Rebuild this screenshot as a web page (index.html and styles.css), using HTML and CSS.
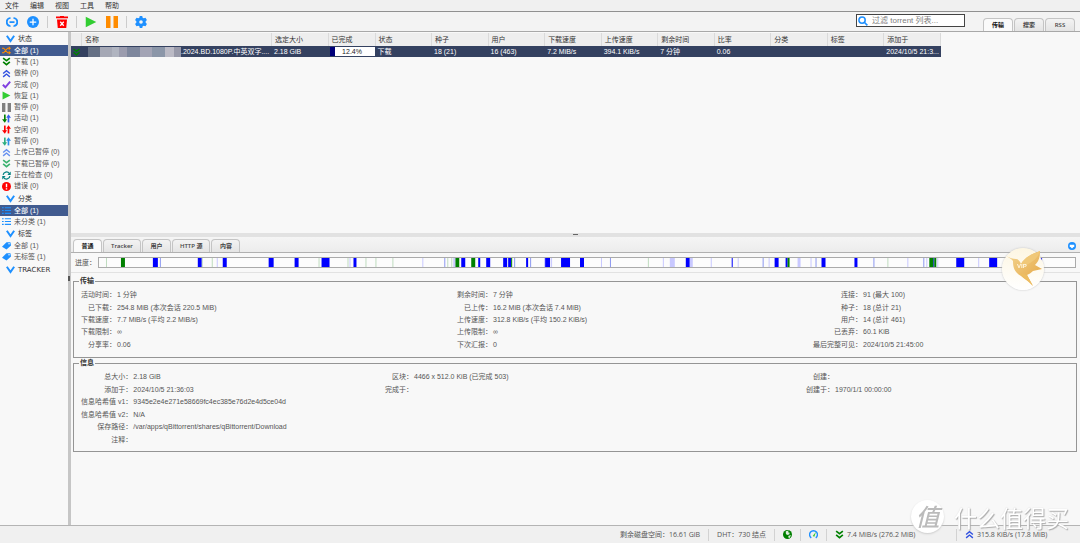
FILE: index.html
```html
<!DOCTYPE html>
<html>
<head>
<meta charset="utf-8">
<title>qBittorrent</title>
<link rel="stylesheet" href="styles.css">
</head>
<body>
<svg class="defs" aria-hidden="true">
  <symbol id="down2" viewBox="0 0 16 16"><path d="M2 2l6 4.500 6-4.500M2 8.500l6 5 6-5" fill="none" stroke="currentColor" stroke-width="3"/></symbol>
  <symbol id="up2" viewBox="0 0 16 16"><path d="M2 8l6-5 6 5M2 14l6-5 6 5" fill="none" stroke="currentColor" stroke-width="2.500"/></symbol>
  <symbol id="chev" viewBox="0 0 16 16"><path d="M1.500 3L8 12.500l6.500-9.500" fill="none" stroke="#1e90ff" stroke-width="3.500"/></symbol>
  <symbol id="shuffle" viewBox="0 0 16 16"><path d="M0 4h3l7 8h3M0 12h3l7-8h3" fill="none" stroke="#ff8c00" stroke-width="2"/><path d="M12 .5L16 4l-4 3.500zM12 8.500l4 3.500-4 3.500z" fill="#ff8c00"/></symbol>
  <symbol id="check" viewBox="0 0 16 16"><path d="M1.500 8.500l4.500 4.500L14.500 3" fill="none" stroke="#8040e0" stroke-width="3.500"/></symbol>
  <symbol id="play" viewBox="0 0 16 16"><path d="M1 1l14 7-14 7z" fill="#32cd32"/></symbol>
  <symbol id="pause" viewBox="0 0 16 16"><path d="M0 0h6v16H0zM10 0h6v16h-6z" fill="currentColor"/></symbol>
  <symbol id="active" viewBox="0 0 16 16"><path d="M5 1v11" stroke="var(--a)" stroke-width="3"/><path d="M0 9.500h9L5 15.500z" fill="var(--a)"/><path d="M11.500 4v11" stroke="var(--b)" stroke-width="3"/><path d="M7.500 6.500h8.500L11.500.5z" fill="var(--b)"/></symbol>
  <symbol id="sync" viewBox="0 0 16 16"><path d="M2 7a6 6 0 0 1 11-2.500M14 9a6 6 0 0 1-11 2.500" fill="none" stroke="#008080" stroke-width="2.200"/><path d="M15.500 1v6h-6zM.5 15V9h6z" fill="#008080"/></symbol>
  <symbol id="error" viewBox="0 0 16 16"><circle cx="8" cy="8" r="8" fill="#f00"/><path d="M8 3v6.500M8 11v2.500" stroke="#fff" stroke-width="2.500"/></symbol>
  <symbol id="list" viewBox="0 0 16 16"><path d="M0 3h3M5 3h11M0 8h3M5 8h11M0 13h3M5 13h11" stroke="#1e90ff" stroke-width="2"/></symbol>
  <symbol id="tag" viewBox="0 0 16 16"><path d="M8 2h7l1 6-8 7-8-5z" fill="#1e90ff"/><circle cx="12.500" cy="5" r="1.300" fill="#fff"/></symbol>
  <symbol id="link" viewBox="0 0 24 24"><path d="M9 4H8a8 8 0 0 0-6.500 8A8 8 0 0 0 8 20h1M15 4h1a8 8 0 0 1 6.500 8A8 8 0 0 1 16 20h-1M7 12h10" fill="none" stroke="#1e90ff" stroke-width="3.500"/></symbol>
  <symbol id="plus" viewBox="0 0 24 24"><circle cx="12" cy="12" r="12" fill="#1e90ff"/><path d="M12 5.500v13M5.500 12h13" stroke="#fff" stroke-width="2.500"/></symbol>
  <symbol id="trash" viewBox="0 0 24 24"><path d="M0 1h8V0h8v1h8v3.500H0zM2 7h20l-1.500 17h-17z" fill="#f00"/><path d="M8.500 11.500l7 8M15.500 11.500l-7 8" stroke="#fff" stroke-width="2.500"/></symbol>
  <symbol id="gear" viewBox="0 0 24 24"><path d="M9.500 0h5l.8 3.500 2.200 1.200L21 3.600l2.800 4.600-2.600 2.600v2.400l2.600 2.600L21 20.400l-3.500-1.100-2.200 1.200-.8 3.500h-5l-.8-3.500-2.200-1.200L3 20.400.2 15.800l2.600-2.600v-2.400L.2 8.200 3 3.600l3.500 1.100 2.200-1.200z" fill="#1e90ff"/><circle cx="12" cy="12" r="3.600" fill="#f4f4f4"/></symbol>
</svg>

<nav class="menubar">
  <button>文件</button><button>编辑</button><button>视图</button><button>工具</button><button>帮助</button>
</nav>

<header class="toolbar">
  <div class="tools">
    <button aria-label="添加链接"><svg><use href="#link"/></svg></button>
    <button aria-label="添加文件"><svg><use href="#plus"/></svg></button>
    <i class="sep"></i>
    <button aria-label="删除"><svg><use href="#trash"/></svg></button>
    <i class="sep"></i>
    <button aria-label="恢复"><svg><use href="#play"/></svg></button>
    <button aria-label="暂停" class="orange"><svg><use href="#pause"/></svg></button>
    <i class="sep"></i>
    <button aria-label="选项"><svg><use href="#gear"/></svg></button>
  </div>
  <label class="filter">
    <svg viewBox="0 0 16 16"><circle cx="6.500" cy="6.500" r="5" fill="none" stroke="#1e90ff" stroke-width="2.500"/><path d="M10.500 10.500l4.500 4.500" stroke="#1e90ff" stroke-width="2.500"/></svg>
    <input type="text" placeholder="过滤 torrent 列表..." aria-label="过滤 torrent 列表">
  </label>
  <div class="tabs">
    <button class="on">传输</button><button>搜索</button><button>RSS</button>
  </div>
</header>

<main class="work">
  <aside class="side">
    <h2><svg><use href="#chev"/></svg>状态</h2>
    <ul class="states">
      <li class="sel"><svg><use href="#shuffle"/></svg>全部 (1)</li>
      <li><svg class="green"><use href="#down2"/></svg>下载 (1)</li>
      <li><svg class="blue"><use href="#up2"/></svg>做种 (0)</li>
      <li><svg><use href="#check"/></svg>完成 (0)</li>
      <li><svg><use href="#play"/></svg>恢复 (1)</li>
      <li><svg class="gray"><use href="#pause"/></svg>暂停 (0)</li>
      <li><svg class="a1"><use href="#active"/></svg>活动 (1)</li>
      <li><svg class="a2"><use href="#active"/></svg>空闲 (0)</li>
      <li><svg class="a3"><use href="#active"/></svg>暂停 (0)</li>
      <li><svg class="sky"><use href="#up2"/></svg>上传已暂停 (0)</li>
      <li><svg class="mint"><use href="#down2"/></svg>下载已暂停 (0)</li>
      <li><svg><use href="#sync"/></svg>正在检查 (0)</li>
      <li><svg><use href="#error"/></svg>错误 (0)</li>
    </ul>
    <h2><svg><use href="#chev"/></svg>分类</h2>
    <ul>
      <li class="sel"><svg><use href="#list"/></svg>全部 (1)</li>
      <li><svg><use href="#list"/></svg>未分类 (1)</li>
    </ul>
    <h2><svg><use href="#chev"/></svg>标签</h2>
    <ul>
      <li><svg><use href="#tag"/></svg>全部 (1)</li>
      <li><svg><use href="#tag"/></svg>无标签 (1)</li>
    </ul>
    <h2 class="latin"><svg><use href="#chev"/></svg>TRACKER</h2>
  </aside>
  <div class="vsplit"><i></i></div>

  <div class="content">
    <section class="torrents">
      <table>
        <colgroup><col class="c-icon"><col class="c-name"><col><col class="c-done"><col span="10"></colgroup>
        <thead><tr><th></th><th>名称</th><th>选定大小</th><th>已完成</th><th>状态</th><th>种子</th><th>用户</th><th>下载速度</th><th>上传速度</th><th>剩余时间</th><th>比率</th><th>分类</th><th>标签</th><th>添加于</th></tr></thead>
        <tbody><tr>
          <td class="state"><svg><use href="#down2"/></svg></td>
          <td><div class="name"><i class="mosaic"></i><span>.2024.BD.1080P.中英双字....</span></div></td>
          <td>2.18 GiB</td>
          <td class="done"><div class="meter"><i style="width:12.4%"></i><span>12.4%</span></div></td>
          <td>下载</td><td>18 (21)</td><td>16 (463)</td><td>7.2 MiB/s</td><td>394.1 KiB/s</td><td>7 分钟</td><td>0.06</td><td></td><td></td><td>2024/10/5 21:3...</td>
        </tr></tbody>
      </table>
    </section>
    <div class="hsplit"><i></i></div>
    <section class="details">
      <div class="detailbar">
        <div class="tabs"><button class="on">普通</button><button>Tracker</button><button>用户</button><button>HTTP 源</button><button>内容</button></div>
        <button class="collapse" aria-label="收起"><svg viewBox="0 0 16 16"><circle cx="8" cy="8" r="8" fill="#1e90ff"/><path d="M3.500 5.500h9v3L8 13 3.500 8.500z" fill="#fff"/></svg></button>
      </div>
      <div class="progress">
        <span>进度：</span>
        <svg class="pieces" viewBox="98 0 978 10" preserveAspectRatio="none">
          <path class="b" d="M152 0h5v10h-5zM197 0h4v10h-4zM222 0h4v10h-4zM268 0h5v10h-5zM294 0h4v10h-4zM321 0h8v10h-8zM353 0h3v10h-3zM461 0h4v10h-4zM478 0h2v10h-2zM486 0h4v10h-4zM503 0h4v10h-4zM508 0h3v10h-3zM526 0h2v10h-2zM545 0h5v10h-5zM561 0h9v10h-9zM580 0h4v10h-4zM686 0h4v10h-4zM732 0h1v10h-1zM775 0h4v10h-4zM786 0h2v10h-2zM822 0h4v10h-4zM855 0h3v10h-3zM934 0h1v10h-1zM957 0h8v10h-8zM990 0h8v10h-8zM1040 0h3v10h-3z"/>
          <path class="g" d="M120 0h4v10h-4zM455 0h4v10h-4zM471 0h4v10h-4zM511 0h1v10h-1zM788 0h2v10h-2zM930 0h4v10h-4zM935 0h2v10h-2z"/>
          <path class="lb" d="M216 0h1v10h-1zM349 0h1v10h-1zM422 0h1v10h-1zM453 0h2v10h-2zM544 0h1v10h-1zM551 0h1v10h-1zM601 0h1v10h-1zM663 0h1v10h-1zM670 0h5v10h-5zM690 0h3v10h-3zM711 0h1v10h-1zM738 0h1v10h-1zM769 0h1v10h-1zM798 0h3v10h-3zM811 0h1v10h-1zM908 0h1v10h-1zM927 0h1v10h-1zM938 0h1v10h-1zM979 0h1v10h-1z"/>
          <path class="mb" d="M159 0h1v10h-1zM444 0h1v10h-1zM514 0h1v10h-1zM530 0h1v10h-1zM610 0h1v10h-1zM763 0h1v10h-1zM816 0h1v10h-1zM874 0h1v10h-1zM924 0h1v10h-1z"/>
          <path class="lg" d="M105 0h1v10h-1zM201 0h1v10h-1zM211 0h1v10h-1zM318 0h1v10h-1zM347 0h1v10h-1zM365 0h1v10h-1zM375 0h1v10h-1zM392 0h1v10h-1zM447 0h1v10h-1zM451 0h1v10h-1zM648 0h1v10h-1zM888 0h1v10h-1z"/>
        </svg>
      </div>
      <fieldset class="transfer">
        <legend>传输</legend>
        <div class="cols">
          <dl><dt>活动时间：</dt><dd>1 分钟</dd><dt>已下载：</dt><dd>254.8 MiB (本次会话 220.5 MiB)</dd><dt>下载速度：</dt><dd>7.7 MiB/s (平均 2.2 MiB/s)</dd><dt>下载限制：</dt><dd>∞</dd><dt>分享率：</dt><dd>0.06</dd></dl>
          <dl><dt>剩余时间：</dt><dd>7 分钟</dd><dt>已上传：</dt><dd>16.2 MiB (本次会话 7.4 MiB)</dd><dt>上传速度：</dt><dd>312.8 KiB/s (平均 150.2 KiB/s)</dd><dt>上传限制：</dt><dd>∞</dd><dt>下次汇报：</dt><dd>0</dd></dl>
          <dl><dt>连接：</dt><dd>91 (最大 100)</dd><dt>种子：</dt><dd>18 (总计 21)</dd><dt>用户：</dt><dd>14 (总计 461)</dd><dt>已丢弃：</dt><dd>60.1 KiB</dd><dt>最后完整可见：</dt><dd>2024/10/5 21:45:00</dd></dl>
        </div>
      </fieldset>
      <fieldset class="info">
        <legend>信息</legend>
        <div class="cols">
          <dl><dt>总大小：</dt><dd>2.18 GiB</dd><dt>添加于：</dt><dd>2024/10/5 21:36:03</dd><dt>信息哈希值 v1：</dt><dd>9345e2e4e271e58669fc4ec385e76d2e4d5ce04d</dd><dt>信息哈希值 v2：</dt><dd>N/A</dd><dt>保存路径：</dt><dd>/var/apps/qBittorrent/shares/qBittorrent/Download</dd><dt>注释：</dt><dd></dd></dl>
          <dl><dt>区块：</dt><dd>4466 x 512.0 KiB (已完成 503)</dd><dt>完成于：</dt><dd></dd></dl>
          <dl><dt>创建：</dt><dd></dd><dt>创建于：</dt><dd>1970/1/1 00:00:00</dd></dl>
        </div>
      </fieldset>
    </section>
  </div>
</main>

<footer class="status">
  <span>剩余磁盘空间：16.61 GiB</span>
  <span>DHT：730 结点</span>
  <span><svg viewBox="0 0 16 16"><circle cx="8" cy="8" r="8" fill="#008000"/><path d="M5 2l5-1-1 3 3 1-1 3-4 1-2-3zM10 10l4-1-2 5-3-1z" fill="#dfeedd"/></svg></span>
  <span><svg viewBox="0 0 16 16"><path d="M4 14a7 7 0 1 1 8 0" fill="none" stroke="#1e90ff" stroke-width="2.500"/><path d="M12.500 3L9.500 12l-3-1.500z" fill="#32cd32"/></svg></span>
  <span class="speed down"><svg class="green"><use href="#down2"/></svg>7.4 MiB/s (276.2 MiB)</span>
  <span class="speed"><svg class="blue"><use href="#up2"/></svg>315.8 KiB/s (17.8 MiB)</span>
</footer>

<div class="vip">
  <svg viewBox="0 0 42 42">
    <defs><linearGradient id="gold" x1="0" y1="0" x2="1" y2="1"><stop offset="0" stop-color="#f3d795"/><stop offset="1" stop-color="#e5a43f"/></linearGradient></defs>
    <path d="M4 8c4 2 7 3 10 3 2 0 4 2 5 5C23 9 30 6 38 3c0 6-1 10-5 14l7 4-9 2c-2 2-4 3-6 4l6 11c-5-6-9-7-12-10-7-4-8-9-8-15-1-2-4-3-7-5z" fill="url(#gold)"/>
    <path d="M19 16C23 9 30 6 38 3c-2 7-7 11-16 15z" fill="#f0c878"/>
    <path d="M25 27l-8-2 14 13z" fill="#edbd62"/>
  </svg>
  <span>VIP</span>
</div>
<div class="brand"><b>值</b><span>什么值得买</span></div>
</body>
</html>
```
FILE: styles.css
```css
* { box-sizing: border-box; }
body {
  margin: 0;
  min-height: 100vh;
  display: flex;
  flex-direction: column;
  background: #f8f8f8;
  color: #555;
  font: 7px/10px "Liberation Sans", "Noto Sans CJK SC", sans-serif;
}
.defs { position: absolute; width: 0; height: 0; }
svg { display: block; flex: none; }
button {
  margin: 0;
  padding: 0;
  border: 0;
  background: none;
  color: inherit;
  font: inherit;
}
.green { color: #008000; }
.blue { color: #3050e0; }
.sky { color: #6590f0; }
.mint { color: #3cb371; }
.gray { color: #808080; }
.orange { color: #ff8c00; }
.a1 { --a: #008000; --b: #3860e8; }
.a2 { --a: #f00; --b: #f00; }
.a3 { --a: #2eae80; --b: #2e90e8; }

.menubar {
  display: flex;
  gap: 11px;
  height: 12px;
  padding-left: 5px;
  background: #f0f0f0;
  border-bottom: 1px solid #909090;
  color: #333;
}
.toolbar {
  display: flex;
  height: 20px;
  padding-right: 5px;
  background: #f3f3f3;
  border-bottom: 1px solid #a8a8a8;
}
.tools {
  display: flex;
  align-items: center;
  gap: 9px;
  margin-right: auto;
  padding-left: 6px;
}
.tools svg { width: 12px; height: 12px; }
.sep { width: 1px; height: 12px; margin: 0 -1px; background: #ccc; }
.filter {
  display: flex;
  align-items: center;
  align-self: flex-start;
  width: 109px;
  height: 13px;
  margin: 2px 18px 0 0;
  padding-left: 1px;
  background: #fff;
  border: 1px solid #444;
}
.filter svg { width: 10px; height: 10px; }
.filter input {
  flex: 1;
  min-width: 0;
  padding: 0 0 0 4px;
  border: 0;
  outline: 0;
  background: none;
  font: 8px/10px "Liberation Sans", "Noto Sans CJK SC", sans-serif;
}
.filter input::placeholder { color: #808080; }
.tabs { display: flex; align-items: flex-end; gap: 1px; }
.tabs button {
  height: 13px;
  min-width: 30px;
  padding: 0 7px;
  border: 1px solid #c4c4c4;
  border-bottom: 0;
  border-radius: 4px 4px 0 0;
  background: linear-gradient(#f3f3f3, #e4e4e4);
  color: #444;
  font: 600 6px/12px "Open Sans", "Noto Sans CJK SC", sans-serif;
  white-space: nowrap;
}
.tabs .on { background: #fafafa; color: #111; font-weight: 700; }

.work { flex: 1; display: flex; min-height: 0; }
.side { width: 68px; flex: none; }
.side h2 {
  display: flex;
  align-items: center;
  gap: 3px;
  height: 13px;
  margin: 0;
  padding-left: 6px;
  color: #333;
  font-size: 7px;
  font-weight: 400;
}
.side h2 svg { width: 9px; height: 9px; }
.side .latin { height: 15px; font-family: "DejaVu Sans", sans-serif; }
.side ul {
  display: grid;
  grid-auto-rows: 1fr;
  min-height: 22px;
  margin: 0;
  padding: 0;
  list-style: none;
}
.side .states { min-height: 147px; }
.side li {
  display: flex;
  align-items: center;
  gap: 3px;
  padding-left: 2px;
  white-space: nowrap;
}
.side li svg { width: 9px; height: 9px; }
.side .sel { background: #415b8f; color: #fff; font-weight: 500; }
.vsplit {
  display: flex;
  align-items: center;
  width: 3px;
  background: #c6c6c6;
}
.vsplit i { width: 2px; height: 5px; background: #555; }

.content { flex: 1; min-width: 0; display: flex; flex-direction: column; }
.torrents { flex: 201 1 0; overflow: hidden; }
.torrents table {
  width: 870px;
  margin-top: 1px;
  table-layout: fixed;
  border-collapse: separate;
  border-spacing: 0;
}
.c-icon { width: 11px; }
.c-name { width: 190px; }
.c-done { width: 47px; }
.torrents th {
  height: 13px;
  padding: 0 2px 0 3px;
  background: #eee;
  border-right: 1px solid #dadada;
  color: #333;
  font-weight: 400;
  text-align: left;
}
.torrents td {
  height: 11px;
  padding: 0 1px 0 2px;
  background: #344160;
  color: #fff;
  white-space: nowrap;
}
.torrents .state { padding: 0 0 0 1px; color: #008000; }
.torrents .done { padding: 0 1px; }
.state svg { width: 9px; height: 8px; }
.name { display: flex; align-items: center; padding-left: 4px; }
.mosaic {
  flex: none;
  width: 93px;
  height: 10px;
  background: linear-gradient(90deg, #657084 0 12px, #a5a8b5 12px 24px, #b0b4c0 24px 31px, #9b9cae 31px 39px, #7e879d 39px 52px, #a3a4b5 52px 64px, #8b96a8 64px 77px, #bbbac5 77px 86px, #9899a9 86px);
}
.meter {
  display: flex;
  position: relative;
  height: 9px;
  background: #fff;
}
.meter i { background: #00007a; }
.meter span { position: absolute; inset: 0; line-height: 9px; color: #222; text-align: center; }

.hsplit {
  display: flex;
  justify-content: center;
  height: 4px;
  background: #e2e2e2;
}
.hsplit i { width: 5px; height: 1px; margin-top: 1px; background: #666; }
.details { flex: 288 1 0; }
.detailbar {
  display: flex;
  justify-content: space-between;
  height: 16px;
  padding: 2px 4px 0 2px;
  background: linear-gradient(#f5f5f5, #ececec);
  border-bottom: 1px solid #b0b0b0;
}
.detailbar .tabs button { min-width: 29px; }
.collapse { align-self: center; }
.collapse svg { width: 8px; height: 8px; }
.progress {
  display: flex;
  align-items: center;
  gap: 2px;
  height: 20px;
  padding: 0 4px;
  border-bottom: 1px solid #e2e2e2;
}
.pieces {
  flex: 1;
  min-width: 0;
  height: 11px;
  background: #fcfcfc;
  border: 1px solid #aaa;
}
.b { fill: #00f; }
.g { fill: #008000; }
.lb { fill: #c8c8ff; }
.mb { fill: #8c98f0; }
.lg { fill: #bfdcbf; }

fieldset {
  min-width: 0;
  margin: 0 3px 0 2px;
  padding: 3px 3px 6px 7px;
  border: 1px solid #959595;
}
legend {
  margin-left: -2px;
  padding: 0 1px;
  color: #333;
  font-weight: 700;
}
.cols { display: flex; }
dl {
  display: grid;
  grid-template-columns: auto 1fr;
  column-gap: 1px;
  align-items: center;
  margin: 0;
  white-space: nowrap;
}
dt { text-align: right; }
dd { margin: 0; }
.transfer { margin-top: 3px; }
.transfer dl { grid-template-rows: repeat(5, 1fr); min-height: 62px; }
.transfer dl:nth-child(1) { flex: 376 1 0; }
.transfer dl:nth-child(2) { flex: 356 1 0; }
.transfer dl:nth-child(3) { flex: 260 1 0; }
.info dl { grid-template-rows: repeat(6, 1fr); min-height: 75px; }
.info dl:nth-child(1) { flex: 304 1 0; }
.info dl:nth-child(2) { flex: 421 1 0; }
.info dl:nth-child(3) { flex: 267 1 0; }
.info { padding-bottom: 5px; }

.status {
  display: flex;
  align-items: center;
  justify-content: flex-end;
  height: 18px;
  padding-right: 24px;
  background: #f0f0f0;
  border-top: 1px solid #b4b4b4;
  font-family: "Open Sans", "Noto Sans CJK SC", sans-serif;
}
.status span {
  display: flex;
  align-items: center;
  gap: 3px;
  height: 12px;
  padding: 0 8px;
  white-space: nowrap;
}
.status span + span { border-left: 1px solid #d2d2d2; }
.status svg { width: 9px; height: 9px; }
.status .speed { min-width: 100px; }
.status .down { min-width: 130px; }

.vip {
  position: fixed;
  right: 36px;
  top: 248px;
  width: 42px;
  height: 42px;
  border-radius: 50%;
  background: linear-gradient(#fdf6e2, #fff);
  box-shadow: 0 0 2px #bbb;
}
.vip span {
  position: absolute;
  left: 15px;
  top: 14px;
  color: #fff8e4;
  font-size: 6px;
  line-height: 8px;
  font-weight: 700;
}
.brand {
  position: fixed;
  right: 11px;
  bottom: 10px;
  display: flex;
  align-items: center;
  gap: 10px;
  color: #fff;
  font: 23px/24px "Noto Sans CJK SC", sans-serif;
  text-shadow: 1px 1px 1px #aaa, 0 0 1px #ccc;
}
.brand b {
  width: 33px;
  height: 33px;
  border-radius: 50%;
  background: #fff;
  box-shadow: 0 1px 2px #ccc;
  color: #bbb;
  font-size: 24px;
  font-style: italic;
  font-weight: 500;
  line-height: 32px;
  text-align: center;
  text-shadow: none;
}
```
